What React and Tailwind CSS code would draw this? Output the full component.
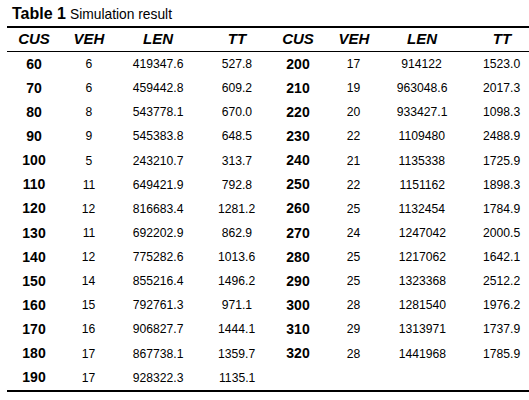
const left = [
  ['60', '6', '419347.6', '527.8'],
  ['70', '6', '459442.8', '609.2'],
  ['80', '8', '543778.1', '670.0'],
  ['90', '9', '545383.8', '648.5'],
  ['100', '5', '243210.7', '313.7'],
  ['110', '11', '649421.9', '792.8'],
  ['120', '12', '816683.4', '1281.2'],
  ['130', '11', '692202.9', '862.9'],
  ['140', '12', '775282.6', '1013.6'],
  ['150', '14', '855216.4', '1496.2'],
  ['160', '15', '792761.3', '971.1'],
  ['170', '16', '906827.7', '1444.1'],
  ['180', '17', '867738.1', '1359.7'],
  ['190', '17', '928322.3', '1135.1'],
];

const right = [
  ['200', '17', '914122', '1523.0'],
  ['210', '19', '963048.6', '2017.3'],
  ['220', '20', '933427.1', '1098.3'],
  ['230', '22', '1109480', '2488.9'],
  ['240', '21', '1135338', '1725.9'],
  ['250', '22', '1151162', '1898.3'],
  ['260', '25', '1132454', '1784.9'],
  ['270', '24', '1247042', '2000.5'],
  ['280', '25', '1217062', '1642.1'],
  ['290', '25', '1323368', '2512.2'],
  ['300', '28', '1281540', '1976.2'],
  ['310', '29', '1313971', '1737.9'],
  ['320', '28', '1441968', '1785.9'],
];

const cols = 'grid grid-cols-[54px_56px_82px_76px_46px_66px_70px_72px]';
const heads = ['CUS', 'VEH', 'LEN', 'TT', 'CUS', 'VEH', 'LEN', 'TT'];

// plain figures are set a little condensed in the source
function Num({ children, last }) {
  return (
    <div className={`text-center text-[13.5px] ${last ? 'pl-[18px]' : ''}`}>
      <span className="inline-block scale-x-[0.9]">{children}</span>
    </div>
  );
}

function Cells({ row, last }) {
  if (!row) return [0, 1, 2, 3].map((i) => <div key={i} />);
  return (
    <>
      <div className="text-center font-bold text-[14px]">{row[0]}</div>
      <Num>{row[1]}</Num>
      <Num>{row[2]}</Num>
      <Num last={last}>{row[3]}</Num>
    </>
  );
}

export default function App() {
  return (
    <div className="w-[529px] h-[400px] bg-white text-black font-['Liberation_Sans',sans-serif] overflow-hidden">
      <div className="pl-[12px] pt-[2px] h-[26px] flex items-baseline gap-[4px]">
        <span className="font-bold text-[16px]">Table 1</span>
        <span className="inline-block origin-left scale-x-[0.92] text-[15px]">Simulation result</span>
      </div>
      <div className="ml-[7px] w-[522px] border-t-2 border-b-2 border-black">
        <div className={`${cols} h-[24px] items-center border-b border-black`}>
          {heads.map((h, i) => (
            <div key={i} className={`text-center font-bold italic text-[15px] ${i === 7 ? 'pl-[18px]' : ''}`}>{h}</div>
          ))}
        </div>
        {left.map((row, r) => (
          <div key={r} className={`${cols} h-[24.15px] items-center`}>
            <Cells row={row} />
            <Cells row={right[r]} last />
          </div>
        ))}
      </div>
    </div>
  );
}
